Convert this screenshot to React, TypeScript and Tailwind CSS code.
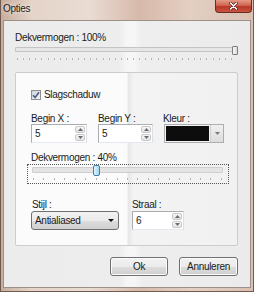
import React from 'react';

// Win7 "Opties" dialog (Aero frame, light client area)

function Ticks({ count, className }: { count: number; className: string }) {
  return (
    <div className={`flex justify-between h-[2px] ${className}`}>
      {Array.from({ length: count }).map((_, i) => (
        <div key={i} className="w-px h-[2px] bg-[#b5b5b5]" />
      ))}
    </div>
  );
}

function SpinArrows() {
  return (
    <div className="flex flex-col gap-px mr-px my-px">
      <div className="w-[10px] h-[8px] rounded-[2px] border border-[#c9c9c9] bg-[linear-gradient(#f6f6f6,#e2e2e2)] flex items-center justify-center">
        <svg width="5" height="3" viewBox="0 0 5 3"><path d="M2.5 0L5 3H0z" fill="#6b6b6b" /></svg>
      </div>
      <div className="w-[10px] h-[8px] rounded-[2px] border border-[#c9c9c9] bg-[linear-gradient(#f6f6f6,#e2e2e2)] flex items-center justify-center">
        <svg width="5" height="3" viewBox="0 0 5 3"><path d="M0 0H5L2.5 3z" fill="#6b6b6b" /></svg>
      </div>
    </div>
  );
}

function SpinBox({ value, className }: { value: string; className: string }) {
  return (
    <div className={`flex items-stretch h-[19px] border border-[#abadb3] border-r-[#dbdfe6] border-b-[#e3e9ef] bg-white ${className}`}>
      <span className="flex-1 pl-[3px] leading-[17px]">{value}</span>
      <SpinArrows />
    </div>
  );
}

function Button({ label, className }: { label: string; className: string }) {
  return (
    <div className={`h-[19px] rounded-[3px] border border-[#707070] bg-[linear-gradient(#f2f2f2_0%,#ebebeb_50%,#dddddd_51%,#cfcfcf_100%)] shadow-[inset_0_0_0_1px_#fbfbfb] flex items-center justify-center ${className}`}>
      {label}
    </div>
  );
}

export default function App() {
  return (
    <div className="w-[254px] h-[292px] flex flex-col overflow-hidden font-['Liberation_Sans',Arial,sans-serif] text-[10px] tracking-[-0.3px] text-[#1a1a1a] border-x border-b border-[#6f5a4f] bg-[linear-gradient(90deg,#c9ad9d_0%,#e4d3c8_12%,#e9dcd3_35%,#d7b9aa_55%,#e3cfc3_75%,#d9c0b2_100%)]">
      {/* Title bar */}
      <div className="h-[20px] flex items-start justify-between shrink-0">
        <span className="pl-[2px] pt-[3px] text-[10px] leading-[12px] text-[#222] [text-shadow:0_0_4px_#fff]">Opties</span>
        <div className="w-[37px] h-[13px] mr-px rounded-b-[4px] border border-t-0 border-[#6b2b22] bg-[linear-gradient(#e59a86_0%,#cf6552_45%,#b8392a_55%,#c8533f_100%)] flex items-center justify-center">
          <svg width="9" height="8" viewBox="0 0 9 8">
            <path d="M1.5 1L7.5 7M7.5 1L1.5 7" stroke="#5a1e17" strokeWidth="3" strokeLinecap="round" />
            <path d="M1.5 1L7.5 7M7.5 1L1.5 7" stroke="#ffffff" strokeWidth="1.6" strokeLinecap="round" />
          </svg>
        </div>
      </div>

      {/* Client area */}
      <div className="flex-1 mx-[2px] mb-[3px] border border-[#9c908a] bg-[linear-gradient(90deg,#ececec_0%,#ededed_47%,#f6f6f6_50%,#f6f6f6_53%,#eeeeee_56%,#ebebeb_100%)] pl-[11px] pr-[12px] pt-[11px] flex flex-col">
        <div className="leading-[12px]">Dekvermogen : 100%</div>

        {/* Slider 100% */}
        <div className="relative mt-[2px] h-[9px]">
          <div className="mt-px h-[5px] border border-[#c4c4c4] bg-[#e6e6e6] rounded-[1px]" />
          <div className="absolute right-0 top-0 w-[6px] h-[9px] rounded-[1px] border border-[#7d7d7d] bg-[linear-gradient(90deg,#fafafa,#d9d9d9)]" />
        </div>
        <Ticks count={36} className="mt-[3px] ml-[2px] mr-[6px]" />

        {/* Group box */}
        <div className="mt-[12px] h-[174px] border border-[#c9ced2] rounded-[2px] bg-[linear-gradient(90deg,#fbfbfb_0%,#fbfbfb_50%,#e6e6e6_51%,#f3f3f3_53%,#f1f1f1_100%)] pl-[11px] pt-[17px] flex flex-col">
          <div className="ml-[4px] flex items-center h-[10px] gap-[3px]">
            <div className="w-[10px] h-[10px] border border-[#8e8f8f] bg-[linear-gradient(135deg,#d0d4dc,#f4f4f4)] flex items-center justify-center">
              <svg width="8" height="8" viewBox="0 0 8 8">
                <path d="M1 4.2L3.1 6.5L7 1.2" stroke="#4a5d8a" strokeWidth="1.6" fill="none" />
              </svg>
            </div>
            <span className="leading-[10px]">Slagschaduw</span>
          </div>

          <div className="ml-[4px] flex mt-[13px]">
            <div className="w-[56px] flex flex-col">
              <span className="leading-[11px]">Begin X :</span>
              <SpinBox value="5" className="w-[56px]" />
            </div>
            <div className="ml-[11px] w-[55px] flex flex-col">
              <span className="leading-[11px]">Begin Y :</span>
              <SpinBox value="5" className="w-[55px]" />
            </div>
            <div className="ml-[10px] w-[60px] flex flex-col">
              <span className="leading-[11px]">Kleur :</span>
              <div className="ml-px h-[19px] w-[60px] flex border border-[#abadb3] bg-[#f4f4f4]">
                <div className="flex-1 m-px bg-[#0d0d0d]" />
                <div className="w-[13px] bg-[linear-gradient(#f0f0f0,#dcdcdc)] border-l border-[#d0d0d0] flex items-center justify-center">
                  <svg width="5" height="3" viewBox="0 0 5 3"><path d="M0 0H5L2.5 3z" fill="#7a7a7a" /></svg>
                </div>
              </div>
            </div>
          </div>

          <div className="ml-[4px] mt-[9px] leading-[11px]">Dekvermogen : 40%</div>
          <div className="mt-px w-[202px] h-[20px] border border-dotted border-[#555]">
            <div className="relative ml-[4px] mt-[2px] w-[191px] h-[6px]">
              <div className="h-[6px] border border-[#cfcfcf] bg-[#e4e4e4] rounded-[1px]" />
              <div className="absolute left-[61px] -top-[2px] w-[7px] h-[11px] rounded-[2px] border border-[#3c7fb1] bg-[linear-gradient(90deg,#e3f4fc,#9fd6f3)]" />
            </div>
            <Ticks count={19} className="mt-[5px] ml-[5px] mr-[6px]" />
          </div>

          <div className="ml-[4px] flex mt-[15px]">
            <div className="w-[88px] flex flex-col">
              <span className="leading-[11px] pl-px">Stijl :</span>
              <div className="mt-px h-[19px] w-[88px] rounded-[3px] border border-[#707070] bg-[linear-gradient(#f2f2f2_0%,#ebebeb_50%,#dddddd_51%,#cfcfcf_100%)] flex items-center justify-between pl-[3px] pr-[4px]">
                <span>Antialiased</span>
                <svg width="6" height="3" viewBox="0 0 6 3"><path d="M0 0H6L3 3z" fill="#111" /></svg>
              </div>
            </div>
            <div className="ml-[13px] w-[52px] flex flex-col">
              <span className="leading-[11px]">Straal :</span>
              <SpinBox value="6" className="mt-px w-[52px]" />
            </div>
          </div>
        </div>

        {/* Buttons */}
        <div className="mt-[11px] flex justify-end gap-[11px]">
          <Button label="Ok" className="w-[58px]" />
          <Button label="Annuleren" className="w-[59px]" />
        </div>
      </div>
    </div>
  );
}
